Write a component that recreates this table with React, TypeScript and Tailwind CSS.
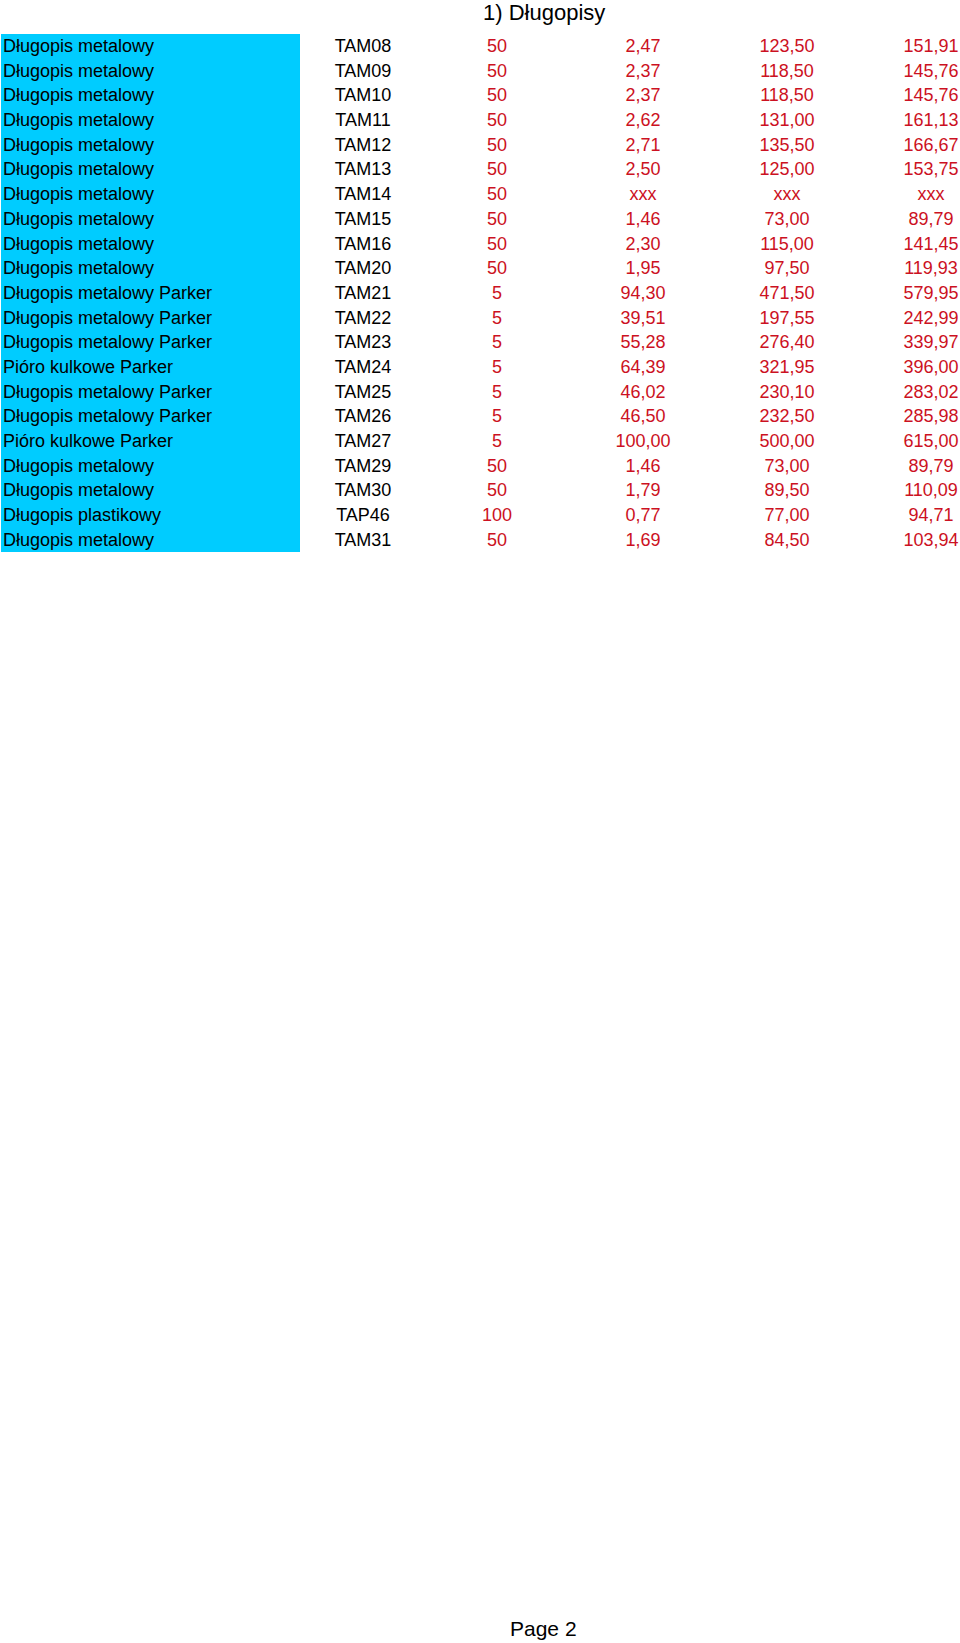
import React from "react";

type Row = [string, string, string, string, string, string];

const rows: Row[] = [
  ["Długopis metalowy", "TAM08", "50", "2,47", "123,50", "151,91"],
  ["Długopis metalowy", "TAM09", "50", "2,37", "118,50", "145,76"],
  ["Długopis metalowy", "TAM10", "50", "2,37", "118,50", "145,76"],
  ["Długopis metalowy", "TAM11", "50", "2,62", "131,00", "161,13"],
  ["Długopis metalowy", "TAM12", "50", "2,71", "135,50", "166,67"],
  ["Długopis metalowy", "TAM13", "50", "2,50", "125,00", "153,75"],
  ["Długopis metalowy", "TAM14", "50", "xxx", "xxx", "xxx"],
  ["Długopis metalowy", "TAM15", "50", "1,46", "73,00", "89,79"],
  ["Długopis metalowy", "TAM16", "50", "2,30", "115,00", "141,45"],
  ["Długopis metalowy", "TAM20", "50", "1,95", "97,50", "119,93"],
  ["Długopis metalowy Parker", "TAM21", "5", "94,30", "471,50", "579,95"],
  ["Długopis metalowy Parker", "TAM22", "5", "39,51", "197,55", "242,99"],
  ["Długopis metalowy Parker", "TAM23", "5", "55,28", "276,40", "339,97"],
  ["Pióro kulkowe Parker", "TAM24", "5", "64,39", "321,95", "396,00"],
  ["Długopis metalowy Parker", "TAM25", "5", "46,02", "230,10", "283,02"],
  ["Długopis metalowy Parker", "TAM26", "5", "46,50", "232,50", "285,98"],
  ["Pióro kulkowe Parker", "TAM27", "5", "100,00", "500,00", "615,00"],
  ["Długopis metalowy", "TAM29", "50", "1,46", "73,00", "89,79"],
  ["Długopis metalowy", "TAM30", "50", "1,79", "89,50", "110,09"],
  ["Długopis plastikowy", "TAP46", "100", "0,77", "77,00", "94,71"],
  ["Długopis metalowy", "TAM31", "50", "1,69", "84,50", "103,94"],
];

export default function App() {
  return (
    <div
      className="h-[1643px] w-[960px] bg-white flex flex-col text-black overflow-hidden"
      style={{ fontFamily: '"Liberation Sans", Arial, sans-serif' }}
    >
      <div className="h-[34px] pl-[483px] pt-[1px]">
        <span className="text-[22px] leading-[24px] whitespace-nowrap">1) Długopisy</span>
      </div>
      <div className="pl-[1px] grid grid-cols-[299px_126px_142px_150px_138px_150px] auto-rows-[24.7px] text-[18px] leading-[24.7px]">
        {rows.map((r, i) => (
          <React.Fragment key={i}>
            <div className="bg-[#00ccff] pl-[2px] whitespace-nowrap">{r[0]}</div>
            <div className="text-center">{r[1]}</div>
            <div className="text-center text-[#cc1122]">{r[2]}</div>
            <div className="text-center text-[#cc1122]">{r[3]}</div>
            <div className="text-center text-[#cc1122]">{r[4]}</div>
            <div className="text-center text-[#cc1122]">{r[5]}</div>
          </React.Fragment>
        ))}
      </div>
      <div className="mt-auto pl-[510px]">
        <span className="text-[21px] leading-[24px] whitespace-nowrap">Page 2</span>
      </div>
    </div>
  );
}
